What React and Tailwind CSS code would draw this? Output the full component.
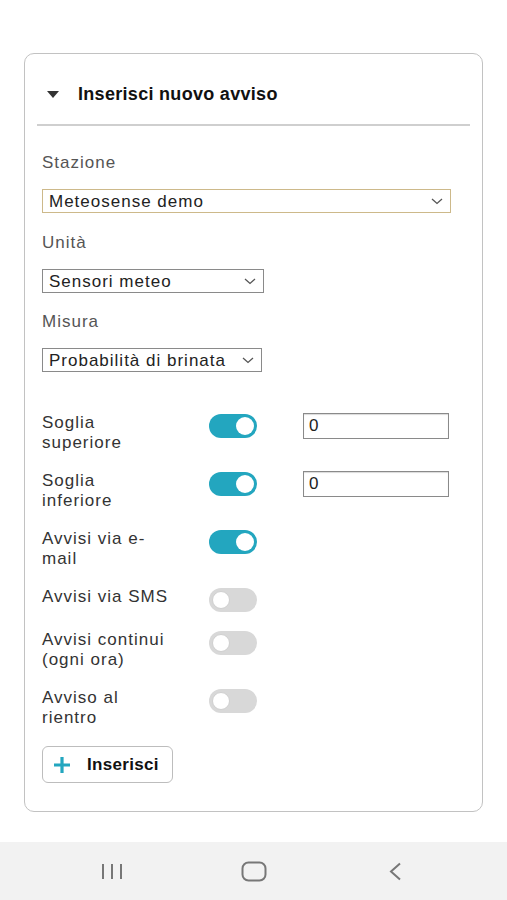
import React, { useState } from "react";

const font = { fontFamily: '"Liberation Sans", Arial, sans-serif' };

const Chevron = () => (
  <svg width="12" height="7" viewBox="0 0 12 7" fill="none" className="shrink-0">
    <path d="M1 1l5 4.5L11 1" stroke="#555" strokeWidth="1.3" />
  </svg>
);

const Select = ({ value, width, focused }) => (
  <div
    className={`h-[24px] flex items-center justify-between pl-[6px] pr-[7px] border text-[17px] tracking-[1px] text-[#222] ${width} ${
      focused ? "border-[#cdb98a] border-[1.5px]" : "border-[#8a8a8a]"
    }`}
  >
    <span className="leading-none">{value}</span>
    <Chevron />
  </div>
);

const Toggle = ({ on, onClick }) => (
  <button
    onClick={onClick}
    className={`mt-[1px] w-[48px] h-[24px] rounded-full flex items-center px-[3px] shrink-0 ${
      on ? "bg-[#23a6bf] justify-end" : "bg-[#d8d8d8] justify-start"
    }`}
  >
    <span
      className={`w-[18px] h-[18px] rounded-full bg-white ${on ? "" : "border border-[#cfcfcf]"}`}
    />
  </button>
);

const Row = ({ lines, on, onToggle, input, tall }) => (
  <div className={`flex items-start ${tall ? "min-h-[21px]" : ""}`}>
    <div className="w-[140px] mr-[27px] text-[17px] tracking-[1px] leading-[20px] text-[#333] whitespace-nowrap">
      {lines.map((l, i) => (
        <div key={i}>{l}</div>
      ))}
    </div>
    <Toggle on={on} onClick={onToggle} />
    {input && (
      <div className="ml-[46px] w-[146px] h-[26px] border border-[#8a8a8a] shadow-[inset_0_1px_1px_rgba(0,0,0,0.15)] flex items-center pl-[5px] text-[17px] text-[#222]">
        0
      </div>
    )}
  </div>
);

export default function App() {
  const [t, setT] = useState([true, true, true, false, false, false]);
  const flip = (i) => setT(t.map((v, j) => (j === i ? !v : v)));

  return (
    <div className="h-[900px] bg-white flex flex-col" style={font}>
      <div className="pt-[53px] px-[24px] flex-1">
        <div className="h-[759px] border border-[#c2c2c2] rounded-[10px]">
          {/* header */}
          <div className="h-[70px] pt-[10px] px-[22px] flex items-center">
            <svg width="12" height="7" viewBox="0 0 12 7">
              <path d="M0 0h12L6 7z" fill="#333" />
            </svg>
            <span className="ml-[19px] text-[18px] font-bold tracking-[0.3px] text-[#111]">
              Inserisci nuovo avviso
            </span>
          </div>
          <div className="mx-[12px] h-[2px] bg-[#cfcfcf]" />

          <div className="px-[17px]">
            <div className="mt-[27px] text-[17px] tracking-[1px] leading-[20px] text-[#555]">Stazione</div>
            <div className="mt-[16px]">
              <Select value="Meteosense demo" width="w-[409px]" focused />
            </div>
            <div className="mt-[20px] text-[17px] tracking-[1px] leading-[20px] text-[#555]">Unità</div>
            <div className="mt-[16px]">
              <Select value="Sensori meteo" width="w-[222px]" />
            </div>
            <div className="mt-[19px] text-[17px] tracking-[1px] leading-[20px] text-[#555]">Misura</div>
            <div className="mt-[16px]">
              <Select value="Probabilità di brinata" width="w-[220px]" />
            </div>

            <div className="mt-[41px] flex flex-col gap-[18px]">
              <Row lines={["Soglia", "superiore"]} on={t[0]} onToggle={() => flip(0)} input />
              <Row lines={["Soglia", "inferiore"]} on={t[1]} onToggle={() => flip(1)} input />
              <Row lines={["Avvisi via e-", "mail"]} on={t[2]} onToggle={() => flip(2)} />
              <Row lines={["Avvisi via SMS"]} on={t[3]} onToggle={() => flip(3)} tall />
              <Row lines={["Avvisi continui", "(ogni ora)"]} on={t[4]} onToggle={() => flip(4)} />
              <Row lines={["Avviso al", "rientro"]} on={t[5]} onToggle={() => flip(5)} />
            </div>

            <button className="mt-[18px] w-[131px] h-[37px] border border-[#bdbdbd] rounded-[6px] flex items-center pl-[10px]">
              <svg width="18" height="18" viewBox="0 0 18 18">
                <path d="M9 1v16M1 9h16" stroke="#23a6bf" strokeWidth="3.2" />
              </svg>
              <span className="ml-[16px] text-[17px] font-bold tracking-[0.3px] text-[#111]">Inserisci</span>
            </button>
          </div>
        </div>
      </div>

      {/* android nav bar */}
      <div className="h-[58px] bg-[#f2f2f2] flex items-center justify-center">
        <div className="w-[142px] flex justify-center">
          <svg width="22" height="17" viewBox="0 0 22 17">
            <path d="M2 1v15M11 1v15M20 1v15" stroke="#777" strokeWidth="2" />
          </svg>
        </div>
        <div className="w-[142px] flex justify-center">
          <svg width="26" height="21" viewBox="0 0 26 21">
            <rect x="1.5" y="1.5" width="23" height="18" rx="6" fill="none" stroke="#777" strokeWidth="2" />
          </svg>
        </div>
        <div className="w-[142px] flex justify-center">
          <svg width="13" height="19" viewBox="0 0 13 19">
            <path d="M11 1.5L2 9.5l9 8" fill="none" stroke="#777" strokeWidth="2" />
          </svg>
        </div>
      </div>
    </div>
  );
}
